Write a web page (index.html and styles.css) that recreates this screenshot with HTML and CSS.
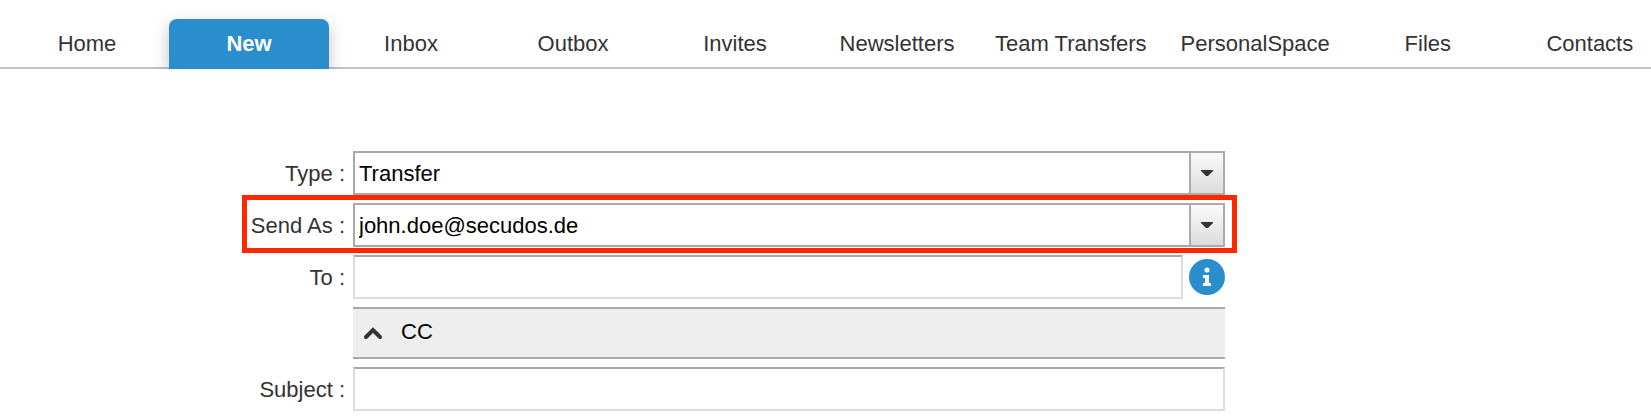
FILE: index.html
```html
<!DOCTYPE html>
<html lang="en">
<head>
  <meta charset="UTF-8">
  <meta name="viewport" content="width=device-width, initial-scale=1.0">
  <title>New Transfer</title>
  <link rel="stylesheet" href="styles.css">
</head>
<body>
  <nav class="tabs">
    <a href="#home">Home</a>
    <a href="#new" class="active" aria-current="page">New</a>
    <a href="#inbox">Inbox</a>
    <a href="#outbox">Outbox</a>
    <a href="#invites">Invites</a>
    <a href="#newsletters">Newsletters</a>
    <a href="#team">Team Transfers</a>
    <a href="#personal">PersonalSpace</a>
    <a href="#files">Files</a>
    <a href="#contacts">Contacts</a>
  </nav>

  <form class="transfer">
    <div class="row">
      <label for="type">Type :</label>
      <div class="combo">
        <select id="type">
          <option>Transfer</option>
        </select>
        <span class="arrow"><svg width="14" height="8" viewBox="0 0 14 8"><path d="M1 1h12v1L8 7H6L1 2z"/></svg></span>
      </div>
    </div>

    <div class="row highlight">
      <label for="send-as">Send As :</label>
      <div class="combo">
        <select id="send-as">
          <option>john.doe@secudos.de</option>
        </select>
        <span class="arrow"><svg width="14" height="8" viewBox="0 0 14 8"><path d="M1 1h12v1L8 7H6L1 2z"/></svg></span>
      </div>
    </div>

    <div class="row">
      <label for="to">To :</label>
      <div class="with-info">
        <input type="text" id="to">
        <button type="button" class="info" aria-label="Info">
          <svg width="36" height="36" viewBox="0 0 36 36">
            <circle cx="18" cy="18" r="18" fill="#2a8dcc"/>
            <circle cx="18" cy="11" r="2.5" fill="#fff"/>
            <path d="M14 16h6v8h2v3h-8v-3h2v-5h-2z" fill="#fff"/>
          </svg>
        </button>
      </div>
    </div>

    <div class="row">
      <button type="button" class="cc">
        <svg width="20" height="14" viewBox="0 0 20 14"><path d="M3 11l7-7 7 7" fill="none" stroke="#333" stroke-width="4" stroke-linecap="round"/></svg>
        CC
      </button>
    </div>

    <div class="row">
      <label for="subject">Subject :</label>
      <input type="text" id="subject">
    </div>
  </form>
</body>
</html>
```
FILE: styles.css
```css
* { box-sizing: border-box; }
body { margin: 0; background: #fff; color: #333; font-family: "Liberation Sans", Arial, sans-serif; font-size: 22px; line-height: 26px; }
input, select, button { font: inherit; color: #000; }

.tabs { display: flex; gap: 2px; padding: 19px 0 0 7px; overflow: hidden; background: linear-gradient(#bdc3c9, #bdc3c9) bottom / 100% 2px no-repeat; }
.tabs a { flex: none; min-width: 160px; height: 50px; padding: 12px 16px; color: #333; text-align: center; text-decoration: none; }
.tabs .active { background: #2a8dcc; color: #fff; font-weight: bold; border-radius: 8px 8px 0 0; box-shadow: 0 6px 16px rgba(0,0,0,0.25); }

.transfer { display: flex; flex-direction: column; gap: 8px; padding: 82px 426px 5px 242px; }
.row { position: relative; display: grid; grid-template-columns: 103px 1fr; column-gap: 8px; align-items: center; }
.row label { padding-top: 2px; text-align: right; white-space: nowrap; }

/* red frame around the row */
.highlight::after { content: ""; position: absolute; inset: -8px -12px -6px 0; border: 5px solid #ff2600; pointer-events: none; z-index: 1; }

.combo { display: grid; grid-template-columns: 1fr 36px; height: 44px; }
.combo select { grid-area: 1 / 1 / 2 / 3; width: 100%; padding: 2px 40px 0 4px; border: 2px solid #a9a9a9; border-radius: 0; background: #fff; appearance: none; outline: none; }
.arrow { grid-area: 1 / 2; display: flex; align-items: center; justify-content: center; border: 2px solid #a9abb0; background: linear-gradient(#fafafa, #dcdcdc); pointer-events: none; }
.arrow svg { fill: #333; }

input { width: 100%; height: 44px; padding: 0 4px; border: 2px solid #ddd; border-top-color: #a9a9a9; border-radius: 0; background: #fff; outline: none; }
.with-info { display: flex; align-items: center; gap: 6px; }
.info { flex: none; width: 36px; height: 36px; padding: 0; border: 0; background: none; cursor: pointer; }
.info svg { display: block; }

.cc { grid-column: 2; display: flex; align-items: center; gap: 18px; height: 52px; padding: 0 10px 2px; border: 2px solid #a9a9a9; border-width: 2px 0; background: #eee; text-align: left; cursor: pointer; }
.cc svg { margin-top: 2px; }
```
